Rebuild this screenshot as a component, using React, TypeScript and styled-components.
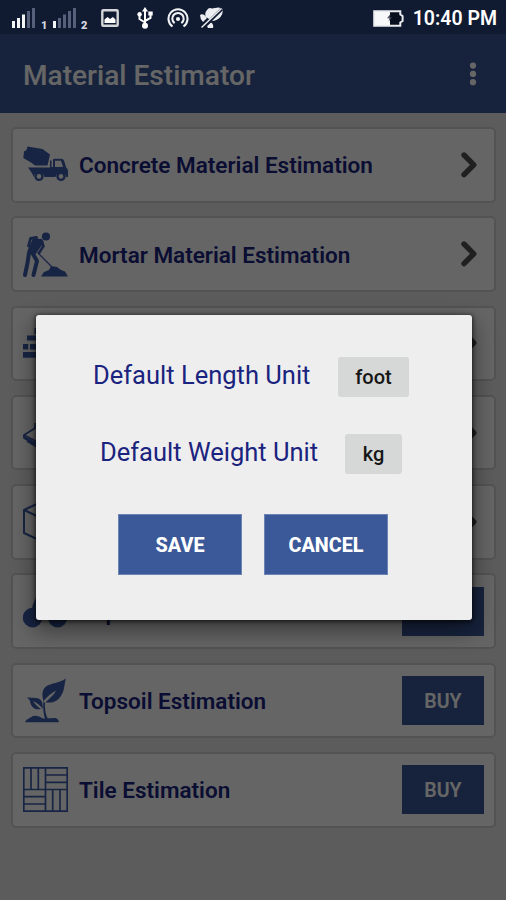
import React from "react";
import styled, { createGlobalStyle } from "styled-components";

const GlobalStyle = createGlobalStyle`
  * { box-sizing: border-box; }
  body { margin: 0; background: #5c5c5c; font-family: Roboto, "Liberation Sans", sans-serif; }
  button { font-family: inherit; border: 0; padding: 0; margin: 0; }
`;

const Screen = styled.div`
  width: 506px;
  height: 900px;
  overflow: hidden;
  display: flex;
  flex-direction: column;
`;

const StatusBar = styled.div`
  flex: 0 0 34px;
  display: flex;
  align-items: center;
  padding: 2px 9px 0 12px;
  background: #101a31;
  color: #fff;
`;

const StatusGlyph = styled.svg<{ $gap?: number }>`
  flex: none;
  display: block;
  margin-left: ${(p) => p.$gap ?? 0}px;
`;

const SimNumber = styled.span<{ $gap: number }>`
  margin: 14px 0 0 ${(p) => p.$gap}px;
  width: 7px;
  font-size: 11px;
  line-height: 11px;
  font-weight: 900;
  color: #d5d8de;
`;

const Clock = styled.span`
  margin: 2px 0 0 9px;
  font-size: 19.5px;
  line-height: 24px;
  font-weight: 600;
  white-space: nowrap;
`;

const Spacer = styled.div`
  flex: 1;
`;

const Content = styled.div`
  position: relative;
  flex: 1;
  display: flex;
  flex-direction: column;
  background: #e7e7e7;
`;

const AppBar = styled.header`
  flex: 0 0 79px;
  display: flex;
  align-items: center;
  justify-content: space-between;
  padding: 2px 28px 0 23px;
  background: #3b5998;
  color: #fff;
`;

const Title = styled.h1`
  margin: 2px 0 0;
  font-size: 28.1px;
  line-height: 32px;
  font-weight: 500;
  white-space: nowrap;
`;

const List = styled.main`
  display: flex;
  flex-direction: column;
  gap: 13.8px;
  padding: 14px 10px 0 11px;
`;

const Card = styled.section`
  height: 75.5px;
  display: flex;
  align-items: center;
  padding: 0 11px 0 10px;
  border: 2px solid #cfcfcf;
  border-radius: 5px;
  background: #fdfdfd;
`;

const CardIcon = styled.svg`
  flex: none;
  width: 45px;
  height: 45px;
  color: #3b5ba8;
`;

const CardLabel = styled.span`
  flex: 1;
  padding: 1px 0 0 11px;
  font-size: 22.5px;
  line-height: 30px;
  font-weight: 600;
  color: #1a237e;
  white-space: nowrap;
`;

const Chevron = styled.svg`
  flex: none;
  margin-right: 4px;
`;

const BuyButton = styled.button`
  flex: none;
  width: 82px;
  height: 49px;
  margin-right: -1px;
  padding-top: 2px;
  background: #3b5998;
  color: #fff;
  font-size: 19.6px;
  font-weight: 600;
`;

const Scrim = styled.div`
  position: absolute;
  inset: 0;
  display: flex;
  align-items: center;
  justify-content: center;
  padding: 1px 0 0 2px;
  background: rgba(0, 0, 0, 0.6);
`;

const Dialog = styled.div`
  width: 436px;
  height: 305px;
  display: flex;
  flex-direction: column;
  align-items: center;
  padding: 42px 1px 0 0;
  border-radius: 3px;
  background: #eeeeee;
  box-shadow: 0 9px 22px 2px rgba(0, 0, 0, 0.42), 0 1px 4px 1px rgba(0, 0, 0, 0.6);
`;

const UnitRow = styled.div`
  height: 40px;
  display: flex;
  align-items: center;
  margin: 0 5px 37px 0;
`;

const UnitLabel = styled.span`
  width: 217px;
  margin: -4px 28px 0 0;
  font-size: 25.5px;
  line-height: 32px;
  color: #1a237e;
  white-space: nowrap;
`;

const UnitButton = styled.button<{ $width: number }>`
  width: ${(p) => p.$width}px;
  height: 40px;
  border-radius: 3px;
  background: #d6d8d8;
  color: #161616;
  font-size: 20px;
  font-weight: 500;
`;

const Actions = styled.div`
  display: flex;
  gap: 22px;
  margin: 3px 1px 0 0;
`;

const ActionButton = styled.button`
  width: 124px;
  height: 61px;
  padding-top: 2px;
  background: #3b5998;
  border: 1px solid #6b83b5;
  color: #fff;
  font-size: 19.8px;
  font-weight: 800;
`;

function Signal({ strength, gap }: { strength: number; gap?: number }) {
  return (
    <StatusGlyph $gap={gap} width="23" height="20" viewBox="0 0 23 20">
      {[7, 10, 13.5, 17, 20].map((h, i) => (
        <rect key={h} x={i * 5} y={20 - h} width="3" height={h} fill={i < strength ? "#f4f5f7" : "#56607a"} />
      ))}
    </StatusGlyph>
  );
}

const ConcreteTruck = () => (
  <CardIcon viewBox="0 0 45 45" fill="currentColor">
    <path d="M4.5 4.5 19.5 7 27 12.5 24.5 23.5H12L8 20.5 .3 16 1 9.5 3.5 8Z" />
    <path d="M5 25.5H27V18.5H28.5V25H30V18Q30 16.8 31.5 16.8H38Q40.5 16.8 41.5 20L43 25 45 28V35H43.4A5.6 5.6 0 0 0 32.5 35H21.5A5.6 5.6 0 0 0 10.5 35L9.5 32Z" />
    <path d="M32 18.8H38L40 25H32Z" fill="#fdfdfd" />
    <circle cx="16" cy="34.4" r="3.5" fill="none" stroke="currentColor" strokeWidth="2.4" />
    <circle cx="38" cy="34.4" r="3.5" fill="none" stroke="currentColor" strokeWidth="2.4" />
  </CardIcon>
);

const Digger = () => (
  <CardIcon viewBox="0 0 45 45" fill="none" stroke="currentColor" strokeLinecap="round" strokeLinejoin="round">
    <circle cx="23" cy="4.5" r="4.1" fill="currentColor" stroke="none" />
    <path d="M13.5 5.5 7.5 6.5 5.5 14" strokeWidth="2.8" />
    <path d="M12 8 18 10 11 20 7 19Z" fill="currentColor" strokeWidth="5" />
    <path d="M18 8 20.5 14 16 21" strokeWidth="2.6" />
    <path d="M6 21 4.5 31 2 43" strokeWidth="4" />
    <path d="M10 22 14 29 10.5 43" strokeWidth="4" />
    <path d="M15 21 28 34" strokeWidth="1.3" />
    <path d="M18 44.5 21 40 26 38 28 34 34 35 38 38 42 39.5 45 44.5Z" fill="currentColor" stroke="none" />
  </CardIcon>
);

const Bricks = () => (
  <CardIcon viewBox="0 0 45 45" fill="currentColor">
    <path d="M11.5 7h9v6h-9zM4 14.5h11v5H4zM17 14.5h11v5H17zM0 23h5.2v5.5H0zM7 23h9v5.5H7zM18 23h9v5.5h-9zM0 31h20v5.7H0zM22 31h20v5.7H22z" />
  </CardIcon>
);

const Slab = () => (
  <CardIcon viewBox="0 0 45 45" fill="none" stroke="currentColor" strokeWidth="1.8" strokeLinejoin="round">
    <path d="M1 25 22 12 44 25 22 36Z" />
    <path d="M1 25V28L22 40 44 28V25M1 27 22 38 44 27M4 31 22 42 40 31" />
    <path d="M12 19V13" />
  </CardIcon>
);

const Cube = () => (
  <CardIcon viewBox="0 0 45 45" fill="none" stroke="currentColor" strokeWidth="2" strokeLinejoin="round">
    <path d="M1 11 22.5 1 44 11V34L22.5 44 1 34ZM1 11 22.5 21 44 11M22.5 21V44" />
  </CardIcon>
);

const Roller = () => (
  <CardIcon viewBox="0 0 45 45" fill="currentColor">
    <circle cx="9.6" cy="28.6" r="9.8" />
    <circle cx="34.6" cy="28.6" r="9.8" />
    <path d="M9 18 13 8H30V24H15Z" />
  </CardIcon>
);

const Sprout = () => (
  <CardIcon viewBox="0 0 45 45" fill="currentColor">
    <path d="M42.8 .5C41 7 42 14 36 20.5C32 24.8 26 25 22.5 24.3C27 20 31 17 33 12.5C28 15 24 19 20.5 23C19 18 18.5 12 23 8.5C28 5 37 5 42.8 .5Z" />
    <path d="M4 19.5C9 20 17 18.5 19 24C20 27 19.5 29 20 31C17 27 13 24.5 10 23C12 26.5 15 29 18 31C11 32.5 8 28 7.3 24.5C7 22.5 6 21 4 19.5Z" />
    <path d="M20.5 23 22 25Q21.5 34 24.8 41H22Q19.5 33 20.5 23Z" />
    <path d="M2 44.3Q3 41.5 5 41L10 38Q15 37 20 40.5L33 40Q35.8 41.5 36 44.3Z" />
  </CardIcon>
);

const Tiles = () => (
  <CardIcon viewBox="0 0 45 45" fill="none" stroke="currentColor" strokeWidth="1.7">
    <path d="M.8 .8H44.2V44.2H.8ZM22.5 .8V44.2M.8 22.5H44.2" />
    <path d="M8 .8V22.5M15.3 .8V22.5M22.5 8H44.2M22.5 15.3H44.2M.8 29.7H22.5M.8 37H22.5M29.7 22.5V44.2M37 22.5V44.2" />
  </CardIcon>
);

interface Item {
  id: string;
  icon: React.ReactNode;
  label?: string;
  locked?: boolean;
}

const items: Item[] = [
  { id: "concrete", icon: <ConcreteTruck />, label: "Concrete Material Estimation" },
  { id: "mortar", icon: <Digger />, label: "Mortar Material Estimation" },
  { id: "brick", icon: <Bricks /> },
  { id: "slab", icon: <Slab /> },
  { id: "cube", icon: <Cube /> },
  { id: "asphalt", icon: <Roller />, label: "Asphalt Estimation", locked: true },
  { id: "topsoil", icon: <Sprout />, label: "Topsoil Estimation", locked: true },
  { id: "tile", icon: <Tiles />, label: "Tile Estimation", locked: true },
];

export default function App() {
  return (
    <Screen>
      <GlobalStyle />
      <StatusBar>
        <Signal strength={3} />
        <SimNumber $gap={6}>1</SimNumber>
        <Signal strength={1} gap={5} />
        <SimNumber $gap={5}>2</SimNumber>
        <StatusGlyph $gap={13} width="18" height="18" viewBox="0 0 18 18">
          <rect x="1.3" y="1.3" width="15.4" height="15.4" rx="1" fill="none" stroke="#d4d6da" strokeWidth="2.4" />
          <path d="M3.5 14V10.5L6.5 8 9 10 12 8 14.5 10.5V14Z" fill="#fff" />
        </StatusGlyph>
        <StatusGlyph $gap={18} width="16" height="22" viewBox="0 0 16 22" fill="none" stroke="#fff" strokeWidth="2">
          <path d="M8 3V18M8 15.5 2.5 12V7M8 14 13.5 11V6" />
          <path d="M8 0 11 4.5H5Z" fill="#fff" stroke="none" />
          <circle cx="8" cy="18.8" r="3" fill="#fff" stroke="none" />
          <circle cx="2.6" cy="7.3" r="2.2" fill="#fff" stroke="none" />
          <path d="M11.3 4.5h4.4v4h-4.4z" fill="#fff" stroke="none" />
        </StatusGlyph>
        <StatusGlyph $gap={14} width="22" height="20" viewBox="0 0 22 20" fill="none" stroke="#f1f2f4" strokeWidth="2.1">
          <path d="M5.5 18.5A9.5 9.5 0 1 1 16.5 18.5" />
          <path d="M7.6 15.2A5.7 5.7 0 1 1 14.4 15.2" />
          <circle cx="11" cy="11" r="2.1" fill="#f1f2f4" stroke="none" />
        </StatusGlyph>
        <StatusGlyph $gap={11} width="23" height="22" viewBox="0 0 23 22">
          <path d="M7 3Q9 0 12 1.5L15 1Q20-.5 22.5 2Q23.5 6 20.5 10Q16.5 14 12 14L6 10Q4 6 7 3Z" fill="#eceef1" />
          <path d="M0 8Q2 6.5 5 8.5L7 11 3 15Q0 12 0 8ZM7 19 11 15.5Q14 17 13 21H8Z" fill="#eceef1" />
          <path d="M2 21.5 22 2" stroke="#101a31" strokeWidth="3.2" />
          <path d="M1.5 20.5 21.5 1.5" stroke="#eceef1" strokeWidth="1.5" />
        </StatusGlyph>
        <Spacer />
        <StatusGlyph width="31" height="17" viewBox="0 0 31 17">
          <path d="M1.2 1.2H27.3V4.5L29.6 6V11L27.3 12.5V15.8H1.2Z" fill="#08101f" stroke="#e9ebee" strokeWidth="2" />
          <path d="M2 2H17V15H2Z" fill="#f7f8f9" />
          <path d="M17.5 4 14 8.2H16.5L15.5 11.5 19 7.2H16.8Z" fill="#41485a" />
        </StatusGlyph>
        <Clock>10:40 PM</Clock>
      </StatusBar>
      <Content>
        <AppBar>
          <Title>Material Estimator</Title>
          <svg width="10" height="26" viewBox="0 0 10 26" fill="#fff">
            <circle cx="5" cy="3.6" r="3.1" />
            <circle cx="5" cy="11.9" r="3.1" />
            <circle cx="5" cy="20.2" r="3.1" />
          </svg>
        </AppBar>
        <List>
          {items.map((item) => (
            <Card key={item.id}>
              {item.icon}
              <CardLabel>{item.label}</CardLabel>
              {item.locked ? (
                <BuyButton>BUY</BuyButton>
              ) : (
                <Chevron
                  width="19"
                  height="28"
                  viewBox="0 0 19 28"
                  fill="none"
                  stroke="#505050"
                  strokeWidth="5.4"
                  strokeLinejoin="round"
                  strokeLinecap="round"
                >
                  <path d="M4 4 13.8 13.8 4 23.6" />
                </Chevron>
              )}
            </Card>
          ))}
        </List>
        <Scrim>
          <Dialog role="dialog">
            <UnitRow>
              <UnitLabel>Default Length Unit</UnitLabel>
              <UnitButton $width={71}>foot</UnitButton>
            </UnitRow>
            <UnitRow>
              <UnitLabel>Default Weight Unit</UnitLabel>
              <UnitButton $width={57}>kg</UnitButton>
            </UnitRow>
            <Actions>
              <ActionButton>SAVE</ActionButton>
              <ActionButton>CANCEL</ActionButton>
            </Actions>
          </Dialog>
        </Scrim>
      </Content>
    </Screen>
  );
}
